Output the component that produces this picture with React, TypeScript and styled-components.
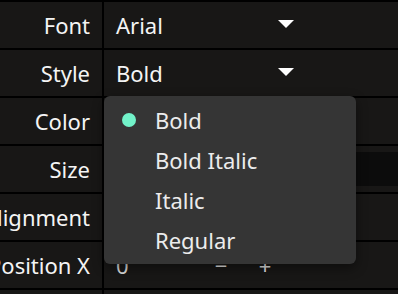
import styled, { createGlobalStyle } from 'styled-components';

const GlobalStyle = createGlobalStyle`
  html, body {
    margin: 0;
    padding: 0;
    background: #000;
  }
  body {
    font-family: "Noto Sans", "Open Sans", sans-serif;
  }
`;

const Grid = styled.div`
  display: grid;
  grid-template-columns: 102px 1fr;
  grid-auto-rows: 46px;
  gap: 2px;
  padding-top: 2px;
  background: #000;
  width: 398px;
  height: 294px;
  overflow: hidden;
`;

const Label = styled.div`
  display: flex;
  align-items: center;
  justify-content: flex-end;
  padding-right: 12px;
  overflow: hidden;
  white-space: nowrap;
  background: #181716;
  color: #f4f4f4;
  font-size: 22px;
`;

const Cell = styled.div`
  position: relative;
  display: flex;
  align-items: center;
  background: #181716;
  color: #f4f4f4;
  font-size: 22px;
`;

const SelectButton = styled.div`
  width: 200px;
  height: 100%;
  display: flex;
  align-items: center;
  justify-content: space-between;
  padding: 0 10px 0 12px;
  box-sizing: border-box;
`;

const Caret = styled.span`
  width: 0;
  height: 0;
  border-left: 8px solid transparent;
  border-right: 8px solid transparent;
  border-top: 8px solid #ffffff;
  margin-top: -2px;
`;

const Menu = styled.ul`
  position: absolute;
  top: 100%;
  left: 0;
  width: 252px;
  margin: 0;
  padding: 4px 0;
  list-style: none;
  background: #353535;
  border-radius: 6px;
  box-shadow: 0 4px 12px rgba(0, 0, 0, 0.45);
  z-index: 10;
`;

const MenuItem = styled.li`
  height: 40px;
  display: flex;
  align-items: center;
  padding-left: 18px;
  gap: 19px;
  color: #ececec;
  font-size: 22px;
`;

const Dot = styled.span<{ $on: boolean }>`
  width: 14px;
  height: 14px;
  border-radius: 50%;
  background: ${p => (p.$on ? '#72f2c9' : 'transparent')};
  flex-shrink: 0;
`;

const TextInput = styled.div`
  flex: 1;
  align-self: stretch;
  margin: 6px 0 6px 6px;
  background: #0c0c0c;
`;

const NumberValue = styled.div`
  width: 95px;
  padding-left: 12px;
  box-sizing: border-box;
  color: #dcdcdc;
`;

const StepButton = styled.div`
  width: 44px;
  text-align: center;
  color: #e6e6e6;
`;

const styles = ['Bold', 'Bold Italic', 'Italic', 'Regular'];

export default function App() {
  const selected = 'Bold';
  return (
    <>
      <GlobalStyle />
      <Grid>
        <Label>Font</Label>
        <Cell>
          <SelectButton>
            <span>Arial</span>
            <Caret />
          </SelectButton>
        </Cell>

        <Label>Style</Label>
        <Cell>
          <SelectButton>
            <span>{selected}</span>
            <Caret />
          </SelectButton>
          <Menu>
            {styles.map(s => (
              <MenuItem key={s}>
                <Dot $on={s === selected} />
                {s}
              </MenuItem>
            ))}
          </Menu>
        </Cell>

        <Label>Color</Label>
        <Cell />

        <Label>Size</Label>
        <Cell>
          <TextInput />
        </Cell>

        <Label>Alignment</Label>
        <Cell />

        <Label>Position X</Label>
        <Cell>
          <NumberValue>0</NumberValue>
          <StepButton>−</StepButton>
          <StepButton>+</StepButton>
        </Cell>

        <Label>Position Y</Label>
        <Cell />
      </Grid>
    </>
  );
}
